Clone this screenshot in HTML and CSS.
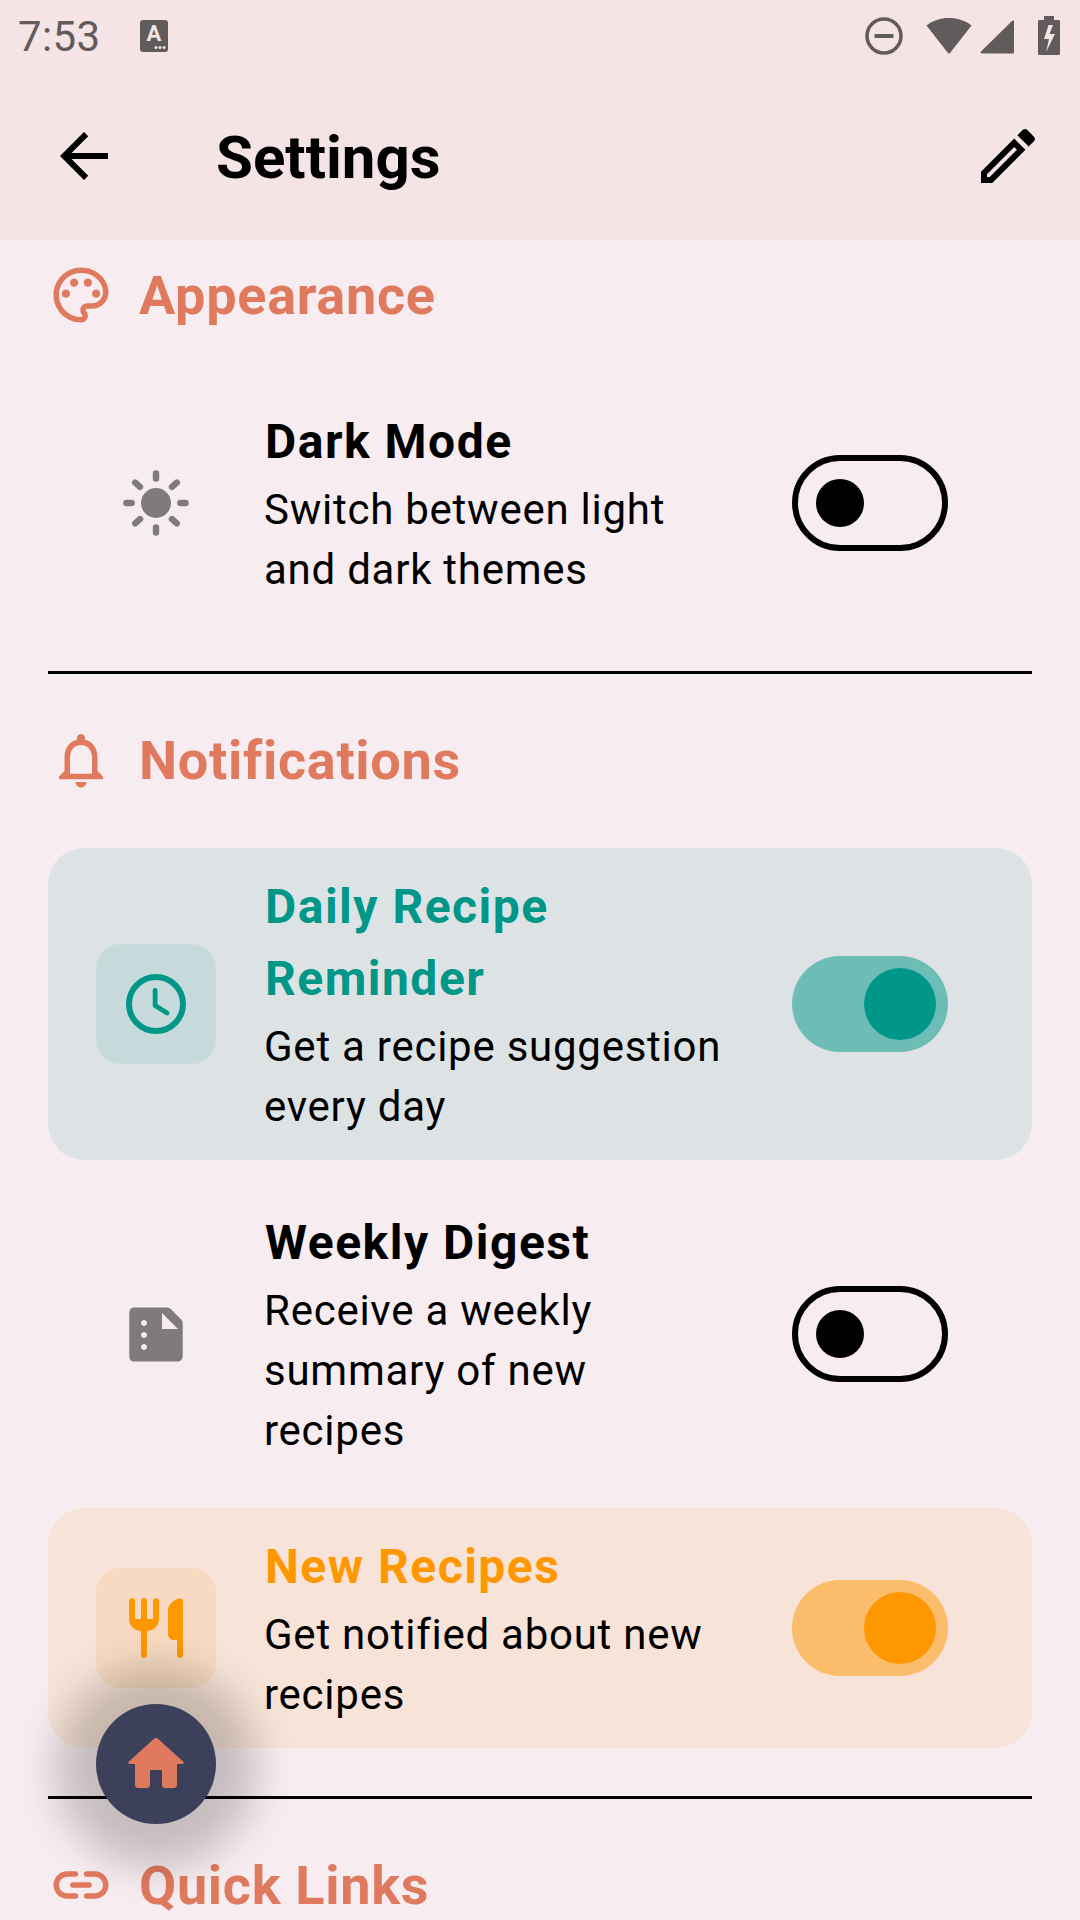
FILE: index.html
```html
<!DOCTYPE html>
<html>
	<head>
		<meta charset="utf-8" />
		<title>Settings</title>
		<link rel="stylesheet" href="styles.css">
	</head>
	<body>
		<div class="topbar">
			<div class="status">
				<span class="time">7:53</span>
				<svg class="st-a" width="28" height="32" viewBox="0 0 28 32">
					<rect width="28" height="32" rx="3" fill="#625b5b"/>
					<text x="14" y="21" text-anchor="middle" class="st-a-letter">A</text>
					<circle cx="16" cy="27.5" r="1.5" fill="#f5e4e5"/>
					<circle cx="20" cy="27.5" r="1.5" fill="#f5e4e5"/>
					<circle cx="24" cy="27.5" r="1.5" fill="#f5e4e5"/>
				</svg>
				<div class="status-right">
					<svg width="38" height="38" viewBox="0 0 38 38">
						<circle cx="19" cy="19" r="17" fill="none" stroke="#625b5b" stroke-width="3.6"/>
						<rect x="9.5" y="17" width="19" height="4" fill="#625b5b"/>
					</svg>
					<svg class="st-wifi" width="46" height="38" viewBox="0 0 46 38">
						<path d="M0.5 8.5C6.5 3.6 14.5 1 23 1s16.500 2.600 22.500 7.500L23.800 36.200c-.4.5-1.200.5-1.600 0z" fill="#625b5b"/>
					</svg>
					<svg class="st-signal" width="34" height="34" viewBox="0 0 34 34">
						<path d="M33 0.500c.6 0 1 .4 1 1V32c0 1-.6 1.500-1.500 1.500H2c-1.500 0-2-1-1-2L32 1c.3-.3.6-.5 1-.5z" fill="#625b5b"/>
					</svg>
					<svg class="st-batt" width="22" height="39" viewBox="0 0 22 39">
						<path fill-rule="evenodd" d="M6 0h10v4h4.500c.8 0 1.500.7 1.500 1.500V37.500c0 .8-.7 1.500-1.500 1.500H1.500C.7 39 0 38.300 0 37.500V5.500C0 4.700.7 4 1.500 4H6z M10.500 9L6 23h5l-3 13 9-18h-5.500L15 9z" fill="#625b5b"/>
					</svg>
				</div>
			</div>
			<div class="appbar">
				<svg class="appbar-back" viewBox="0 0 24 24"><path d="M20 11H7.830l5.590-5.590L12 4l-8 8 8 8 1.410-1.410L7.830 13H20v-2z"/></svg>
				<h1 class="appbar-title">Settings</h1>
				<svg class="appbar-edit" viewBox="0 0 24 24"><path d="M14.060 9.020l.92.92L5.920 19H5v-.92l9.060-9.060M17.660 3c-.25 0-.51.1-.7.29l-1.830 1.830 3.750 3.750 1.830-1.830c.39-.39.39-1.020 0-1.410l-2.340-2.340c-.2-.2-.45-.29-.71-.29zm-3.600 3.190L3 17.250V21h3.750L17.810 9.940l-3.750-3.750z"/></svg>
			</div>
		</div>

		<div class="content">
			<div class="section-head first">
				<svg viewBox="0 0 24 24"><path d="M12 22C6.490 22 2 17.510 2 12S6.490 2 12 2s10 4.040 10 9c0 3.310-2.690 6-6 6h-1.770c-.28 0-.5.22-.5.5 0 .12.05.23.13.33.41.47.64 1.060.64 1.670 0 1.380-1.120 2.500-2.500 2.500zm0-18c-4.410 0-8 3.590-8 8s3.590 8 8 8c.28 0 .5-.22.5-.5 0-.16-.08-.28-.14-.35-.41-.46-.63-1.050-.63-1.650 0-1.380 1.120-2.500 2.500-2.500H16c2.210 0 4-1.790 4-4 0-3.860-3.590-7-8-7z"/><circle cx="6.500" cy="11.500" r="1.500"/><circle cx="9.500" cy="7.500" r="1.500"/><circle cx="14.500" cy="7.500" r="1.500"/><circle cx="17.500" cy="11.500" r="1.500"/></svg>
				<h2>Appearance</h2>
			</div>

			<div class="row">
				<div class="row-icon">
					<svg viewBox="0 0 72 72" class="ic-gray">
						<circle cx="36" cy="36" r="15"/>
						<g class="sun-rays">
							<path d="M36 6.400v5.200M36 60.400v5.200M6.400 36h5.200M60.400 36h5.200M15.200 15.600l4.800 4.200M52 52.200l4.800 4.200M56.800 15.600L52 19.800M20 52.200l-4.800 4.200"/>
						</g>
					</svg>
				</div>
				<div class="row-text">
					<div class="row-title">Dark Mode</div>
					<div class="row-desc">Switch between light and dark themes</div>
				</div>
				<div class="switch"><span class="knob"></span></div>
			</div>

			<div class="divider"></div>

			<div class="section-head">
				<svg viewBox="0 0 24 24"><path d="M12 22c1.100 0 2-.9 2-2h-4c0 1.100.9 2 2 2zm6-6v-5c0-3.070-1.630-5.640-4.500-6.320V4c0-.83-.67-1.500-1.500-1.500s-1.500.67-1.500 1.500v.68C7.640 5.360 6 7.920 6 11v5l-2 2v1h16v-1l-2-2zm-2 1H8v-6c0-2.480 1.510-4.500 4-4.500s4 2.020 4 4.500v6z"/></svg>
				<h2>Notifications</h2>
			</div>

			<div class="row card-teal">
				<div class="row-icon">
					<svg viewBox="0 0 24 24" class="ic-clock">
						<circle cx="12" cy="12" r="9"/>
						<path d="M11.700 7.500v5l4 2.500"/>
					</svg>
				</div>
				<div class="row-text">
					<div class="row-title">Daily Recipe Reminder</div>
					<div class="row-desc">Get a recipe suggestion every day</div>
				</div>
				<div class="switch on"><span class="knob"></span></div>
			</div>

			<div class="row">
				<div class="row-icon">
					<svg viewBox="0 0 72 72" class="ic-gray">
						<path fill-rule="evenodd" d="M14 9.500h33c1.500 0 2.800.6 3.800 1.600l10.300 10.300c1 1 1.600 2.300 1.600 3.800v33c0 2.900-2.300 5.300-5.200 5.300H14c-2.900 0-4.700-2.400-4.700-5.300V14.800c0-2.900 1.800-5.300 4.700-5.300z M42 15v16h16z M24 22a3 3 0 1 0 .01 0z M24 34a3 3 0 1 0 .01 0z M24 46a3 3 0 1 0 .01 0z"/>
					</svg>
				</div>
				<div class="row-text">
					<div class="row-title">Weekly Digest</div>
					<div class="row-desc">Receive a weekly summary of new recipes</div>
				</div>
				<div class="switch"><span class="knob"></span></div>
			</div>

			<div class="row card-orange">
				<div class="row-icon">
					<svg viewBox="0 0 24 24"><path d="M16 6v8c0 1.100.9 2 2 2h1v5c0 .55.45 1 1 1s1-.45 1-1V3.130c0-.65-.61-1.130-1.240-.98C17.600 2.680 16 4.510 16 6zm-5 3H9V3c0-.55-.45-1-1-1s-1 .45-1 1v6H5V3c0-.55-.45-1-1-1s-1 .45-1 1v6c0 2.210 1.790 4 4 4v8c0 .55.45 1 1 1s1-.45 1-1v-8c2.210 0 4-1.790 4-4V3c0-.55-.45-1-1-1s-1 .45-1 1v6z"/></svg>
				</div>
				<div class="row-text">
					<div class="row-title">New Recipes</div>
					<div class="row-desc">Get notified about new recipes</div>
				</div>
				<div class="switch on"><span class="knob"></span></div>
			</div>

			<div class="divider"></div>

			<div class="section-head">
				<svg viewBox="0 0 24 24"><path d="M17 7h-3c-.55 0-1 .45-1 1s.45 1 1 1h3c1.650 0 3 1.350 3 3s-1.350 3-3 3h-3c-.55 0-1 .45-1 1s.45 1 1 1h3c2.760 0 5-2.240 5-5s-2.240-5-5-5zm-9 5c0 .55.45 1 1 1h6c.55 0 1-.45 1-1s-.45-1-1-1H9c-.55 0-1 .45-1 1zm2 3H7c-1.650 0-3-1.350-3-3s1.350-3 3-3h3c.55 0 1-.45 1-1s-.45-1-1-1H7c-2.760 0-5 2.240-5 5s2.240 5 5 5h3c.55 0 1-.45 1-1s-.45-1-1-1z"/></svg>
				<h2>Quick Links</h2>
			</div>
		</div>

		<div class="fab">
			<svg viewBox="0 0 24 24"><path d="M10 19v-5h4v5c0 .55.45 1 1 1h3c.55 0 1-.45 1-1v-7h1.700c.46 0 .68-.57.33-.87L12.670 3.600c-.38-.34-.96-.34-1.340 0l-8.360 7.530c-.34.3-.13.87.33.87H5v7c0 .55.45 1 1 1h3c.55 0 1-.45 1-1z"/></svg>
		</div>
	</body>
</html>
```

FILE: styles.css
```css
*{
	margin:0px;
	padding:0px;
	box-sizing:border-box;
}
html,body{
	width:1080px;
	height:1920px;
	overflow:hidden;
}
body{
	background:#f7ecf0;
	color:#000;
	font-family:Roboto,"Noto Sans",sans-serif;
	position:relative;
}

/* top */
.topbar{
	background:#f5e4e5;
	height:240px;
}
.status{
	height:72px;
	display:flex;
	align-items:center;
	padding:0 20px 0 18px;
}
.time{
	font-size:42px;
	color:#625b5b;
	letter-spacing:0.4px;
}
.st-a{
	margin-left:39px;
}
.st-a-letter{
	font-family:Roboto,sans-serif;
	font-size:22px;
	font-weight:700;
	fill:#f5e4e5;
}
.status-right{
	margin-left:auto;
	display:flex;
	align-items:center;
}
.st-wifi{
	margin-left:23px;
}
.st-signal{
	margin-left:8px;
	margin-top:2px;
}
.st-batt{
	margin-left:24px;
	margin-top:-2px;
}
.appbar{
	height:168px;
	display:flex;
	align-items:center;
	padding:0 36px 0 48px;
}
.appbar svg{
	width:72px;
	height:72px;
}
.appbar-title{
	font-size:60px;
	font-weight:700;
	margin:2px 0 0 96px;
}
.appbar-edit{
	margin-left:auto;
}

/* list */
.content{
	padding:0 48px;
}
.section-head{
	height:128px;
	display:flex;
	align-items:center;
	gap:25px;
	color:#e07a5f;
}
.section-head.first{
	margin-top:-9px;
}
.section-head svg{
	width:66px;
	height:66px;
	fill:#e07a5f;
}
.section-head h2{
	font-size:54px;
	font-weight:700;
	letter-spacing:0.7px;
}
.row{
	display:flex;
	align-items:center;
	margin:24px 0;
	padding:24px 84px 24px 48px;
	border-radius:36px;
}
.row-icon{
	width:120px;
	height:120px;
	flex:none;
	border-radius:24px;
	display:flex;
	align-items:center;
	justify-content:center;
}
.row-icon svg{
	width:72px;
	height:72px;
}
.ic-gray{
	fill:#7f7b7d;
}
.sun-rays{
	fill:none;
	stroke:#7f7b7d;
	stroke-width:6.4;
	stroke-linecap:round;
}
.ic-clock{
	fill:none;
	stroke:#009688;
	stroke-width:2;
	stroke-linecap:round;
	stroke-linejoin:round;
}
.ic-clock path{
	stroke-width:1.6;
}
.row-text{
	flex:1;
	margin:0 63px 0 49px;
}
.row-title{
	font-size:48px;
	line-height:72px;
	font-weight:700;
	letter-spacing:1.5px;
	margin-top:-1px;
}
.row-desc{
	font-size:42px;
	line-height:60px;
	letter-spacing:0.75px;
	margin:2px 0 -1px -1px;
}
.switch{
	width:156px;
	height:96px;
	flex:none;
	border:6px solid #000;
	border-radius:48px;
	display:flex;
	align-items:center;
	padding-left:18px;
}
.knob{
	width:48px;
	height:48px;
	border-radius:50%;
	background:#000;
}
.switch.on{
	border:none;
	padding-left:72px;
}
.switch.on .knob{
	width:72px;
	height:72px;
}

.card-teal{
	background:rgba(0,150,136,0.1);
}
.card-teal .row-icon{
	background:rgba(0,150,136,0.1);
}
.card-teal .row-title{
	color:#009688;
}
.card-teal .switch.on{
	background:rgba(0,150,136,0.5);
}
.card-teal .knob{
	background:#009688;
}
.card-orange{
	background:rgba(255,152,0,0.1);
}
.card-orange .row-icon{
	background:rgba(255,152,0,0.1);
}
.card-orange .row-icon svg{
	fill:#ff9800;
}
.card-orange .row-title{
	color:#ff9800;
}
.card-orange .switch.on{
	background:rgba(255,152,0,0.5);
}
.card-orange .knob{
	background:#ff9800;
}
.divider{
	height:3px;
	background:#000;
	margin:48px 0 22px;
}

.fab{
	position:absolute;
	left:96px;
	top:1704px;
	width:120px;
	height:120px;
	border-radius:50%;
	background:#3d405b;
	display:flex;
	align-items:center;
	justify-content:center;
	box-shadow:0 3px 40px 40px rgba(0,0,0,0.2);
}
.fab svg{
	width:72px;
	height:72px;
	fill:#e07a5f;
}
```
